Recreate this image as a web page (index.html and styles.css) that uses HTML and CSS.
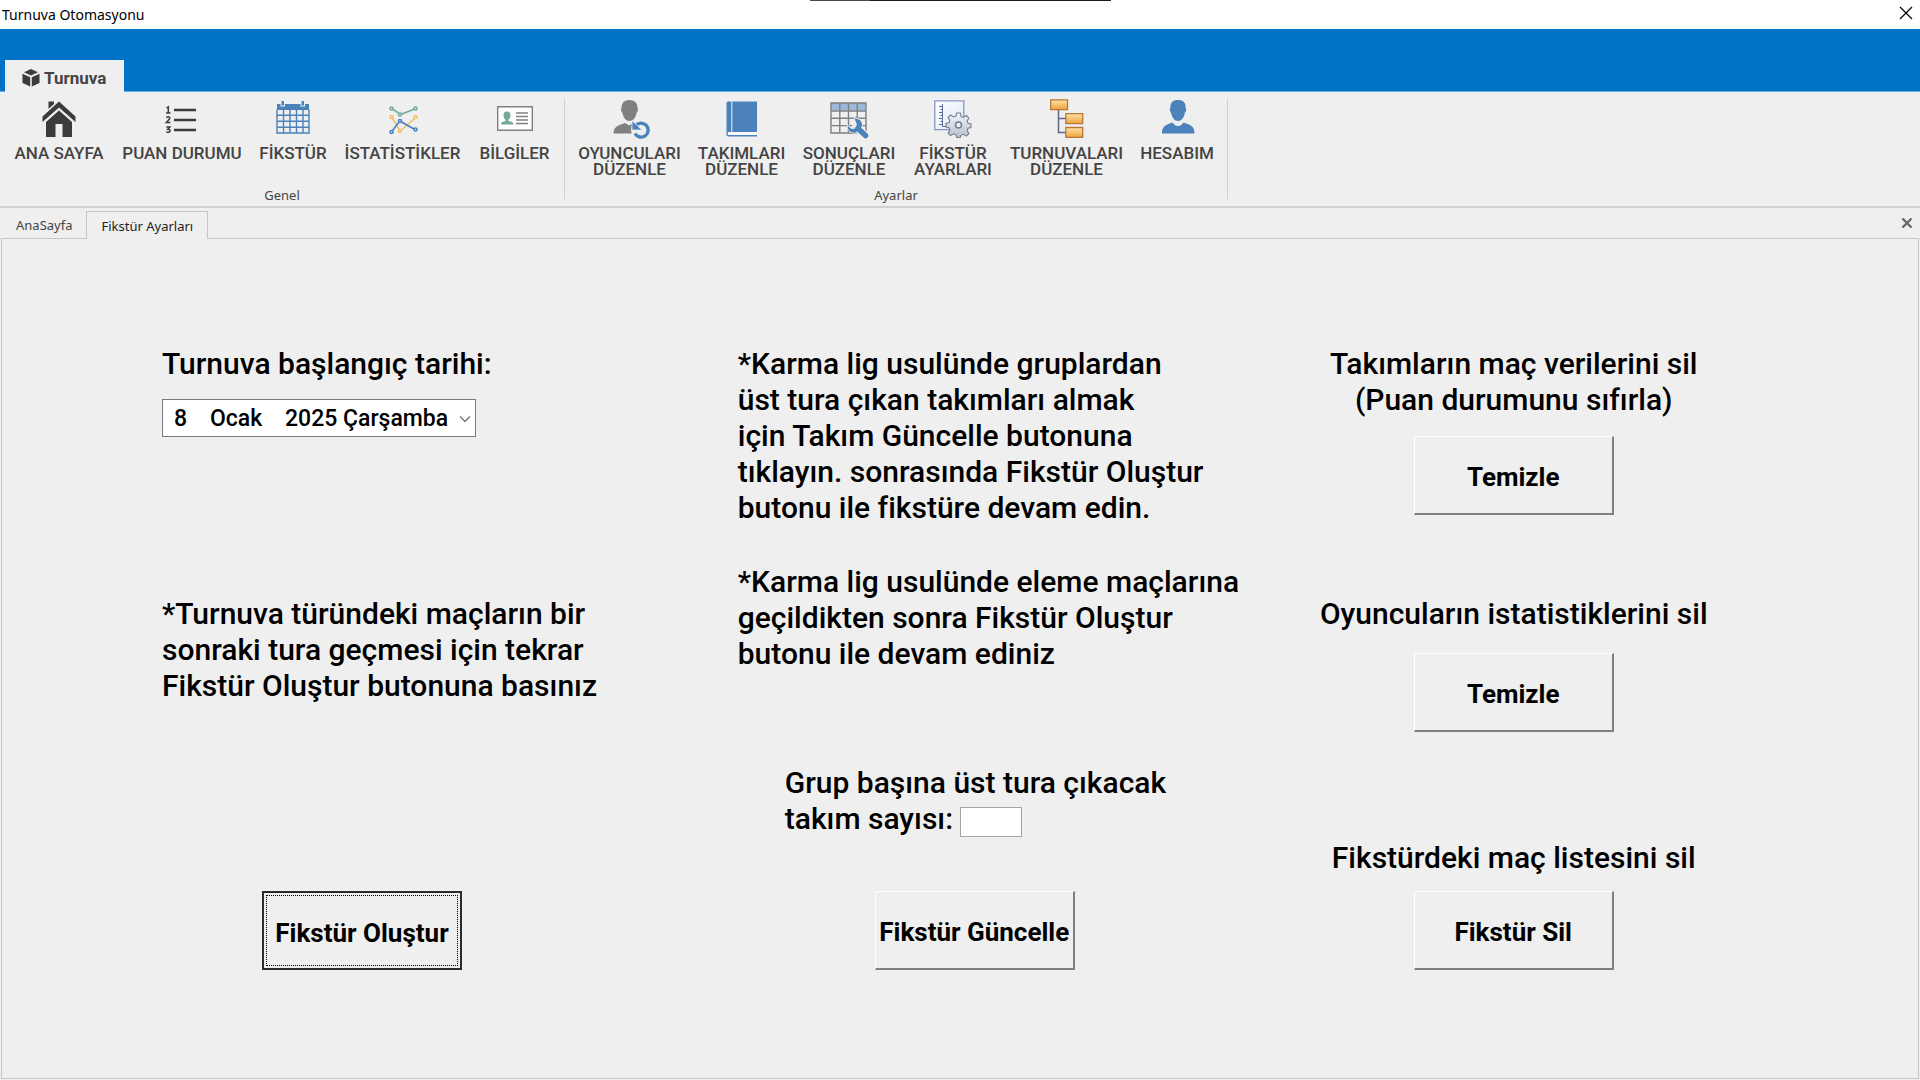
FILE: index.html
```html
<!DOCTYPE html>
<html lang="tr">
<head>
<meta charset="utf-8">
<meta name="viewport" content="width=device-width, initial-scale=1">
<title>Turnuva Otomasyonu</title>
<link rel="stylesheet" href="styles.css">
</head>
<body>
<div class="window">
  <header class="titlebar">
    <span class="titlebar-text">Turnuva Otomasyonu</span>
    <div class="titlebar-grip"></div>
    <button class="titlebar-close" type="button" aria-label="Kapat">
      <svg width="14" height="14" viewBox="0 0 14 14"><path d="M1 1l12 12M13 1L1 13" stroke="#000" stroke-width="1.2" fill="none"/></svg>
    </button>
  </header>

  <div class="ribbon-header">
    <button class="ribbon-tab" type="button">
      <svg width="18" height="18" viewBox="0 0 18 18" fill="#3b3b3b"><path d="M9 0l7 3.200-7 3.200-7-3.200zM.5 4.800l7.700 3.500V17.500L.5 14zM17.500 4.800L9.800 8.300V17.500L17.500 14z"/></svg>
      Turnuva
    </button>
  </div>

  <nav class="ribbon">
    <section class="ribbon-group">
      <div class="ribbon-items ribbon-items-general">
        <button class="ribbon-item" type="button">
          <svg class="icon" viewBox="0 0 40 40" fill="#3b3b3b"><path d="M9.500 2.500h5.500v2.500l-5.500 5zM20 2.500l16.500 15v5.500L20 8.500 3.500 23v-5.500z"/><path d="M20 11.500l13 11.500v15h-9.500V25h-7v13H7V23z"/></svg>
          <span>ANA SAYFA</span>
        </button>
        <button class="ribbon-item" type="button">
          <svg class="icon" viewBox="0 0 40 40"><path d="M12 11h22M12 21h22M12 31h22" stroke="#3b3b3b" stroke-width="2.400"/><path d="M4.500 9l1.800-1.200V14M4 14h4.500M4.300 18.500q3.500-1.500 3.500.5 0 1-3.500 4.500H8.500M4.300 28h3.500l-2 2.200q2.400 0 2.200 1.800-.5 2-3.700 1" stroke="#3b3b3b" stroke-width="1.500" fill="none"/></svg>
          <span>PUAN DURUMU</span>
        </button>
        <button class="ribbon-item" type="button">
          <svg class="icon" viewBox="0 0 40 40"><path d="M4 5h32v6H4z" fill="#4b82bb"/><path d="M4 10.500v23.500h32V10.500M4 16.300h32M4 22.300h32M4 28.300h32M10.500 10v24M17 10v24M23.500 10v24M30 10v24" fill="none" stroke="#4b82bb" stroke-width="1.400"/><path d="M7.500 1.500h4.500v6H7.500zM27.500 1.500H32v6h-4.500z" fill="#efefef"/><path d="M8.500 2h2.500v4.500H8.500zM28.500 2H31v4.500h-2.500z" fill="#4b82bb"/></svg>
          <span>FİKSTÜR</span>
        </button>
        <button class="ribbon-item" type="button">
          <svg class="icon" viewBox="0 0 40 40" fill="none" stroke-width="1.600"><g stroke="#74aa98"><path d="M10 10.500l5.500 3.500M19 15l12.500-5"/><circle cx="8.500" cy="9.500" r="1.500"/><circle cx="17" cy="15.500" r="1.500"/><circle cx="32.500" cy="9.500" r="1.500"/></g><g stroke="#f0c36d"><path d="M9.500 19.500l7 11.500M18.500 31L31.500 19.500"/><circle cx="8.500" cy="18" r="1.500"/><circle cx="17" cy="32" r="1.500"/><circle cx="32.500" cy="18" r="1.500"/></g><g stroke="#4b82bb"><path d="M9.500 31.500l6.500-8.500M18.500 23l12.500 7"/><circle cx="8.500" cy="33" r="1.500"/><circle cx="17" cy="22" r="1.500"/><circle cx="32.500" cy="30.500" r="1.500"/></g></svg>
          <span>İSTATİSTİKLER</span>
        </button>
        <button class="ribbon-item" type="button">
          <svg class="icon" viewBox="0 0 40 40"><path d="M2.700 7.700h34.600v23.600H2.700z" fill="#fff" stroke="#808080" stroke-width="1.400"/><path d="M12 12.500c2.500 0 3.500 1.500 3.500 3.700 0 2-1 4-2 4.600v1.200c2.500.6 5 1.200 5 3.500H6c0-2.300 2-2.900 4.500-3.500v-1.200c-1-.6-2-2.600-2-4.600 0-2.200 1-3.700 3.500-3.700z" fill="#74aa98"/><path d="M21 14h12M21 17.500h12M21 21h12M21 24.500h12" stroke="#808080" stroke-width="1.400"/></svg>
          <span>BİLGİLER</span>
        </button>
      </div>
      <div class="ribbon-caption">Genel</div>
    </section>

    <section class="ribbon-group">
      <div class="ribbon-items ribbon-items-settings">
        <button class="ribbon-item" type="button">
          <svg class="icon" viewBox="0 0 40 40"><path d="M19.500 1c5 0 8 3 8 7.500 1 1.500.5 4-.8 5-1 5-3.700 8.500-7.200 8.500s-6.200-3.500-7.200-8.500c-1.300-1-1.800-3.500-.8-5 0-4.500 3-7.500 8-7.500zM3.500 34.500c0-6.500 4-8 11.500-10.500l4.500 2.500 2.500-2 1 10z" fill="#808080"/><circle cx="31" cy="31" r="7" stroke="#efefef" stroke-width="6" fill="none"/><path d="M25.500 27a7 7 0 1 1-.5 7.500" stroke="#4b82bb" stroke-width="3.400" fill="none"/><path d="M22 21.500v9.500h10z" fill="#4b82bb" stroke="#efefef" stroke-width=".8"/></svg>
          <span>OYUNCULARI DÜZENLE</span>
        </button>
        <button class="ribbon-item" type="button">
          <svg class="icon" viewBox="0 0 40 40"><path d="M6 2.500h29v30.500H6q-1.500 0-1.500-1.500V4q0-1.500 1.500-1.500z" fill="#4b82bb"/><path d="M9.800 2v31" stroke="#efefef"/><path d="M5 32.500v2.800q0 1.500 1.500 1.500H35" stroke="#4b82bb" fill="none" stroke-width="1.400"/><path d="M6.500 34.500H35" stroke="#fff" stroke-width="2"/></svg>
          <span>TAKIMLARI DÜZENLE</span>
        </button>
        <button class="ribbon-item" type="button">
          <svg class="icon" viewBox="0 0 40 40"><path d="M2 4h35v7.500H2z" fill="#9cb8da"/><path d="M2 4h35v30H2zM2 12h35M2 19.300h35M2 26.600h35M10.800 4v30M19.500 4v30M28.200 4v30" stroke="#808080" stroke-width="1.400" fill="none"/><path d="M27 28l9.500 8.500" stroke="#efefef" stroke-width="8" stroke-linecap="round"/><path d="M25.500 19.500c5-.5 8.500 3.500 7.300 8l-6 6c-4.500 1-8.300-2-8.300-7l4 3.500 4.500-.5.800-4.500z" fill="#4b82bb" stroke="#efefef" stroke-width="1.500" paint-order="stroke"/><path d="M29 29.500l7.500 7" stroke="#4b82bb" stroke-width="5.600" stroke-linecap="round"/></svg>
          <span>SONUÇLARI DÜZENLE</span>
        </button>
        <button class="ribbon-item" type="button">
          <svg class="icon" viewBox="0 0 40 40"><defs><linearGradient id="page" x2="1" y2="1"><stop stop-color="#fff"/><stop offset="1" stop-color="#dce5f7"/></linearGradient><linearGradient id="gear" x2="0" y2="1"><stop stop-color="#f4f6fa"/><stop offset="1" stop-color="#b6bfce"/></linearGradient></defs><path d="M1.800 1.800h29v28.800h-29z" fill="url(#page)" stroke="#8796c7" stroke-width="1.300"/><path d="M9.500 5v22.500M6 7.500h3.500M7.500 10.500h2M6 13.500h3.500M7.500 16.500h2M6 19.500h3.500M7.500 22.500h2M6 25.500h3.500M9.500 27.500h4" stroke="#5d6b8d" fill="none"/><path d="M23.700 14h3.600l.8 3.500 2.300.9 3-1.900 2.500 2.500-1.800 3 1 2.300 2.900.7v3.500l-3 .8-.9 2.300 1.800 3-2.500 2.500-3-1.800-2.300 1-.8 2.200h-3.600l-.8-2.700-2.300-1-3 1.800-2.500-2.500 1.800-3-.9-2.300-3-.8v-3.500l3-.7.9-2.300-1.800-3 2.500-2.500 3 1.900 2.300-.9z" fill="url(#gear)" stroke="#737e92" stroke-width="1.100"/><circle cx="25.500" cy="26" r="3" fill="#e9edf4" stroke="#737e92" stroke-width="1.500"/></svg>
          <span>FİKSTÜR AYARLARI</span>
        </button>
        <button class="ribbon-item" type="button">
          <svg class="icon" viewBox="0 0 40 40"><defs><linearGradient id="node" x2="0" y2="1"><stop stop-color="#ffe3a6"/><stop offset="1" stop-color="#eca33c"/></linearGradient></defs><path d="M11.500 11v22.500H19M11.500 19.500H19" stroke="#606a84" stroke-width="1.500" fill="none"/><g fill="url(#node)" stroke="#b8763a" stroke-width="1.300"><path d="M3.700.8h16.800v9.900H3.700z"/><path d="M18.800 14.700h16.900v9.900H18.800z"/><path d="M18.800 28.500h16.900v9.900H18.800z"/></g></svg>
          <span>TURNUVALARI DÜZENLE</span>
        </button>
        <button class="ribbon-item" type="button">
          <svg class="icon" viewBox="0 0 40 40"><path d="M21 1c5 0 8 2.500 7.500 7.500 1.200 1.500.7 4-.5 5-1 5-3.500 8.500-7 8.500s-6-3.500-7-8.500c-1.200-1-1.700-3.500-.5-5C13 3.500 16 1 21 1zM5 34.500c0-6.500 2-8 10.500-11 1.500 2.500 3.500 3.500 5.500 3.500s4-1 5.500-3.500c8.500 3 11 4.500 11 11z" fill="#4b82bb"/></svg>
          <span>HESABIM</span>
        </button>
      </div>
      <div class="ribbon-caption">Ayarlar</div>
    </section>
  </nav>

  <div class="doc-tabs">
    <button class="doc-tab" type="button">AnaSayfa</button>
    <button class="doc-tab doc-tab-active" type="button">Fikstür Ayarları</button>
    <button class="doc-close" type="button" aria-label="Sekmeyi kapat">
      <svg width="12" height="10" viewBox="0 0 12 10"><path d="M1.500 .5l9 9M10.500 .5l-9 9" stroke="#6a6a6a" stroke-width="2.400"/></svg>
    </button>
  </div>

  <main class="panel">
    <section class="column">
      <label class="text" for="start-date">Turnuva başlangıç tarihi:</label>
      <div class="date-field">
        <select id="start-date" class="date-select">
          <option>8&nbsp;&nbsp;&nbsp;&nbsp;Ocak&nbsp;&nbsp;&nbsp;&nbsp;2025 Çarşamba</option>
        </select>
        <svg class="date-arrow" width="12" height="8" viewBox="0 0 12 8"><path d="M1 1.500l5 5 5-5" stroke="#707070" stroke-width="1.300" fill="none"/></svg>
      </div>
      <p class="text round-note">*Turnuva türündeki maçların bir<br>sonraki tura geçmesi için tekrar<br>Fikstür Oluştur butonuna basınız</p>
      <button class="button button-default create-button" type="button">Fikstür Oluştur</button>
    </section>

    <section class="column">
      <p class="text">*Karma lig usulünde gruplardan<br>üst tura çıkan takımları almak<br>için Takım Güncelle butonuna<br>tıklayın. sonrasında Fikstür Oluştur<br>butonu ile fikstüre devam edin.</p>
      <p class="text next-note">*Karma lig usulünde eleme maçlarına<br>geçildikten sonra Fikstür Oluştur<br>butonu ile devam ediniz</p>
      <div class="text team-count">
        <label for="team-count">Grup başına üst tura çıkacak<br>takım sayısı:</label>
        <input id="team-count" class="count-input" type="text">
      </div>
      <button class="button update-button" type="button">Fikstür Güncelle</button>
    </section>

    <section class="column column-centered">
      <p class="text">Takımların maç verilerini sil<br>(Puan durumunu sıfırla)</p>
      <button class="button clear-button" type="button">Temizle</button>
      <p class="text stats-label">Oyuncuların istatistiklerini sil</p>
      <button class="button clear-button" type="button">Temizle</button>
      <p class="text list-label">Fikstürdeki maç listesini sil</p>
      <button class="button" type="button">Fikstür Sil</button>
    </section>
  </main>
</div>
</body>
</html>
```

FILE: styles.css
```css
* { box-sizing: border-box; }

body {
  margin: 0;
  background: #efefef;
  color: #000;
  font-family: Roboto, "Liberation Sans", sans-serif;
}

button, input, select { font: inherit; color: inherit; }
button { margin: 0; padding: 0; border: 0; background: none; }
p { margin: 0; }

.window { display: flex; flex-direction: column; min-height: 100vh; }

.titlebar {
  display: grid;
  grid-template-columns: 1fr 301px 1fr;
  height: 29px;
  background: #fff;
  font-family: "Noto Sans", sans-serif;
  font-size: 14px;
  line-height: 29px;
}
.titlebar-text { padding-left: 2px; }
.titlebar-grip { height: 1px; background: linear-gradient(90deg, #4a4a4a 60px, #1c1c1c 60px); }
.titlebar-close { justify-self: end; display: flex; align-items: center; height: 26px; padding-right: 7px; }

.ribbon-header {
  display: flex;
  align-items: flex-end;
  height: 63px;
  padding-left: 5px;
  background: #0173c7;
  border-bottom: 1px solid #6bb0e3;
}
.ribbon-tab {
  display: flex;
  align-items: center;
  gap: 4px;
  height: 32px;
  margin-bottom: -1px;
  padding: 3px 18px 0 17px;
  background: #efefef;
  color: #444;
  font-size: 17px;
  font-weight: 700;
}

.ribbon { display: flex; height: 116px; border-bottom: 2px solid #d2d2d2; }
.ribbon-group {
  position: relative;
  display: flex;
  flex-direction: column;
  justify-content: space-between;
  padding: 7px 14px 2px 13px;
  color: #444;
}
.ribbon-group::after {
  content: "";
  position: absolute;
  top: 7px;
  right: 0;
  bottom: 7px;
  width: 1px;
  background: #d0d0d0;
}
.ribbon-items { display: grid; column-gap: 17px; }
.ribbon-items-general { grid-template-columns: 92px 120px 68px 117px 73px; }
.ribbon-items-settings { grid-template-columns: 103px 87px 94px 80px 113px 74px; }
.ribbon-item {
  display: flex;
  flex-direction: column;
  align-items: center;
  gap: 6px;
  font-size: 17px;
  font-weight: 500;
  line-height: 16px;
}
.icon { width: 40px; height: 40px; flex: none; }
.ribbon-caption {
  font-family: "Noto Sans", sans-serif;
  font-size: 13px;
  line-height: 18px;
  text-align: center;
}

.doc-tabs {
  display: flex;
  align-items: flex-end;
  height: 30px;
  padding: 0 7px 0 2px;
  font-family: "Noto Sans", sans-serif;
  font-size: 13px;
  color: #444;
}
.doc-tab { height: 27px; padding: 0 14px; }
.doc-tab-active {
  position: relative;
  margin-bottom: -1px;
  height: 28px;
  border: 1px solid #c6c6c6;
  border-bottom: 0;
  background: #efefef;
  color: #222;
}
.doc-close { display: flex; margin-left: auto; margin-bottom: 10px; }

.panel {
  flex: 1;
  display: grid;
  grid-template-columns: 575fr 579fr 392fr;
  margin: 0 1px 1px;
  padding: 107px 208px 108px 160px;
  border: 1px solid #c6c6c6;
}
.column { display: flex; flex-direction: column; align-items: flex-start; }
.column-centered { align-items: center; text-align: center; }

.text { font-size: 30px; font-weight: 500; line-height: 36px; white-space: nowrap; }

.date-field { position: relative; width: 314px; margin-top: 17px; }
.date-select {
  display: block;
  width: 100%;
  height: 38px;
  padding: 0 11px;
  appearance: none;
  background: #fff;
  border: 1px solid #7a7a7a;
  border-radius: 0;
  font-size: 23px;
  font-weight: 500;
}
.date-arrow { position: absolute; right: 5px; top: 16px; pointer-events: none; }

.round-note { margin-top: 159px; }
.next-note { margin-top: 38px; }
.team-count { display: flex; align-items: flex-end; margin-top: 93px; margin-left: 47px; }
.team-count label { width: 175px; }
.count-input {
  width: 62px;
  height: 30px;
  padding: 0 4px;
  background: #fff;
  border: 1px solid #a5a5a5;
}

.button {
  width: 200px;
  height: 79px;
  padding-top: 4px;
  overflow: hidden;
  border: 2px solid;
  border-color: #fff #808080 #808080 #fff;
  border-width: 1px 2px 2px 1px;
  background: #efefef;
  font-size: 26px;
  font-weight: 700;
  white-space: nowrap;
}
.button-default {
  border: 2px solid #2c2c2c;
  outline: 1px dotted #000;
  outline-offset: -5px;
}
.create-button { margin-top: auto; margin-left: 100px; }
.update-button { margin-top: auto; margin-left: 137px; }
.clear-button { margin-top: 18px; }
.stats-label { margin-top: 81px; margin-bottom: 3px; }
.list-label { margin-top: auto; margin-bottom: 15px; }
```
